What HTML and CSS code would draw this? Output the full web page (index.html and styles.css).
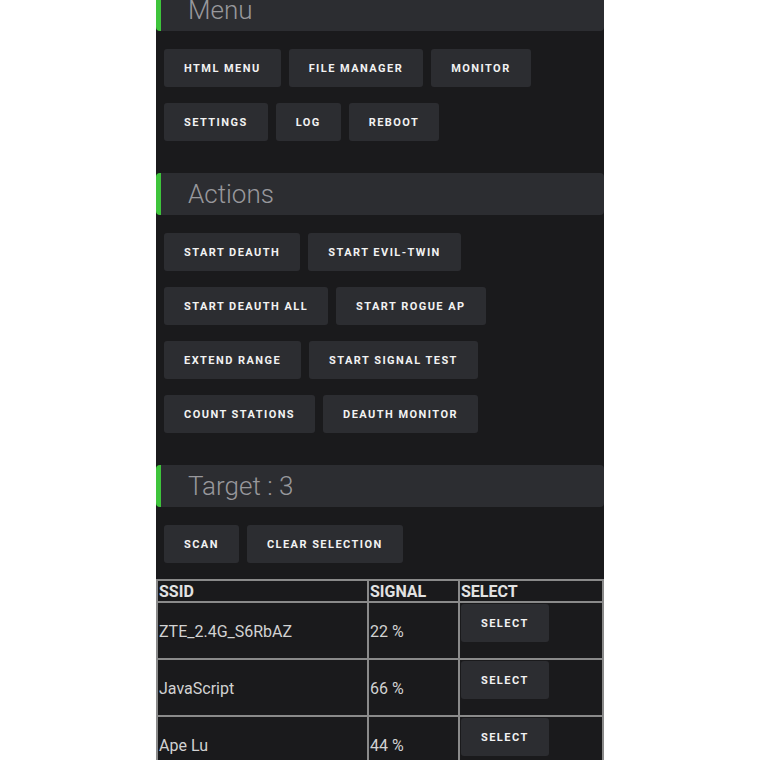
FILE: index.html
```html
<!DOCTYPE html>
<html>
<head>
<meta charset="utf-8">
<title>Menu</title>
<link rel="stylesheet" href="styles.css">
</head>
<body>
<div class="panel">
  <section class="section">
    <h2 class="sec-title">Menu</h2>
    <div class="btn-row">
      <button class="btn">HTML Menu</button>
      <button class="btn">File Manager</button>
      <button class="btn">Monitor</button>
    </div>
    <div class="btn-row">
      <button class="btn">Settings</button>
      <button class="btn">Log</button>
      <button class="btn">Reboot</button>
    </div>
  </section>
  <section class="section">
    <h2 class="sec-title">Actions</h2>
    <div class="btn-row">
      <button class="btn">Start Deauth</button>
      <button class="btn">Start Evil-Twin</button>
    </div>
    <div class="btn-row">
      <button class="btn">Start Deauth All</button>
      <button class="btn">Start Rogue AP</button>
    </div>
    <div class="btn-row">
      <button class="btn">Extend Range</button>
      <button class="btn">Start Signal Test</button>
    </div>
    <div class="btn-row">
      <button class="btn">Count Stations</button>
      <button class="btn">Deauth Monitor</button>
    </div>
  </section>
  <section class="section section-last">
    <h2 class="sec-title">Target : 3</h2>
    <div class="btn-row">
      <button class="btn">Scan</button>
      <button class="btn">Clear Selection</button>
    </div>
  </section>
  <table class="targets">
    <colgroup>
      <col class="c-ssid">
      <col class="c-signal">
      <col class="c-select">
    </colgroup>
    <thead>
      <tr><th>SSID</th><th>SIGNAL</th><th>SELECT</th></tr>
    </thead>
    <tbody>
      <tr><td>ZTE_2.4G_S6RbAZ</td><td>22 %</td><td class="sel"><button class="btn btn-cell">Select</button></td></tr>
      <tr><td>JavaScript</td><td>66 %</td><td class="sel"><button class="btn btn-cell">Select</button></td></tr>
      <tr><td>Ape Lu</td><td>44 %</td><td class="sel"><button class="btn btn-cell">Select</button></td></tr>
    </tbody>
  </table>
</div>
</body>
</html>
```
FILE: styles.css
```css
html, body {
  margin: 0;
  padding: 0;
  background: #ffffff;
}

.panel {
  width: 448px;
  margin: -11px auto 0;
  background: #1a1a1c;
  min-height: 800px;
  font-family: Roboto, "Liberation Sans", sans-serif;
}

.section {
  padding-bottom: 16px;
}

.section-last {
  padding-bottom: 0;
}

.sec-title {
  margin: 0;
  height: 42px;
  line-height: 42px;
  box-sizing: border-box;
  background: #2c2d31;
  border-left: 5px solid #3ec43b;
  border-radius: 4px;
  padding-left: 27px;
  font-family: Roboto, "Liberation Sans", sans-serif;
  font-weight: 300;
  font-size: 26px;
  color: #98989c;
}

.btn-row {
  display: flex;
  gap: 8px;
  padding-left: 8px;
  margin-bottom: 16px;
}

.sec-title + .btn-row {
  margin-top: 18px;
}

.btn {
  height: 38px;
  padding: 0 20px;
  border: none;
  border-radius: 3px;
  background: #2c2d31;
  color: #f2f2f2;
  font-family: Roboto, "Liberation Sans", sans-serif;
  font-weight: 700;
  font-size: 11px;
  letter-spacing: 1.45px;
  text-transform: uppercase;
  white-space: nowrap;
}

.targets {
  width: 448px;
  border-collapse: collapse;
  table-layout: fixed;
  border: 2px solid #8a8a8a;
  color: #d2d2d2;
  font-family: Roboto, "Liberation Sans", sans-serif;
  font-size: 16px;
}

.c-ssid { width: 211px; }
.c-signal { width: 91px; }

.targets th,
.targets td {
  border: 2px solid #8a8a8a;
  padding: 1px 1px 0;
  text-align: left;
}

.targets th {
  font-weight: 700;
  color: #e2e2e2;
}

.targets td.sel {
  vertical-align: top;
}

.btn-cell {
  display: block;
  margin: 0 0 16px;
}
```
